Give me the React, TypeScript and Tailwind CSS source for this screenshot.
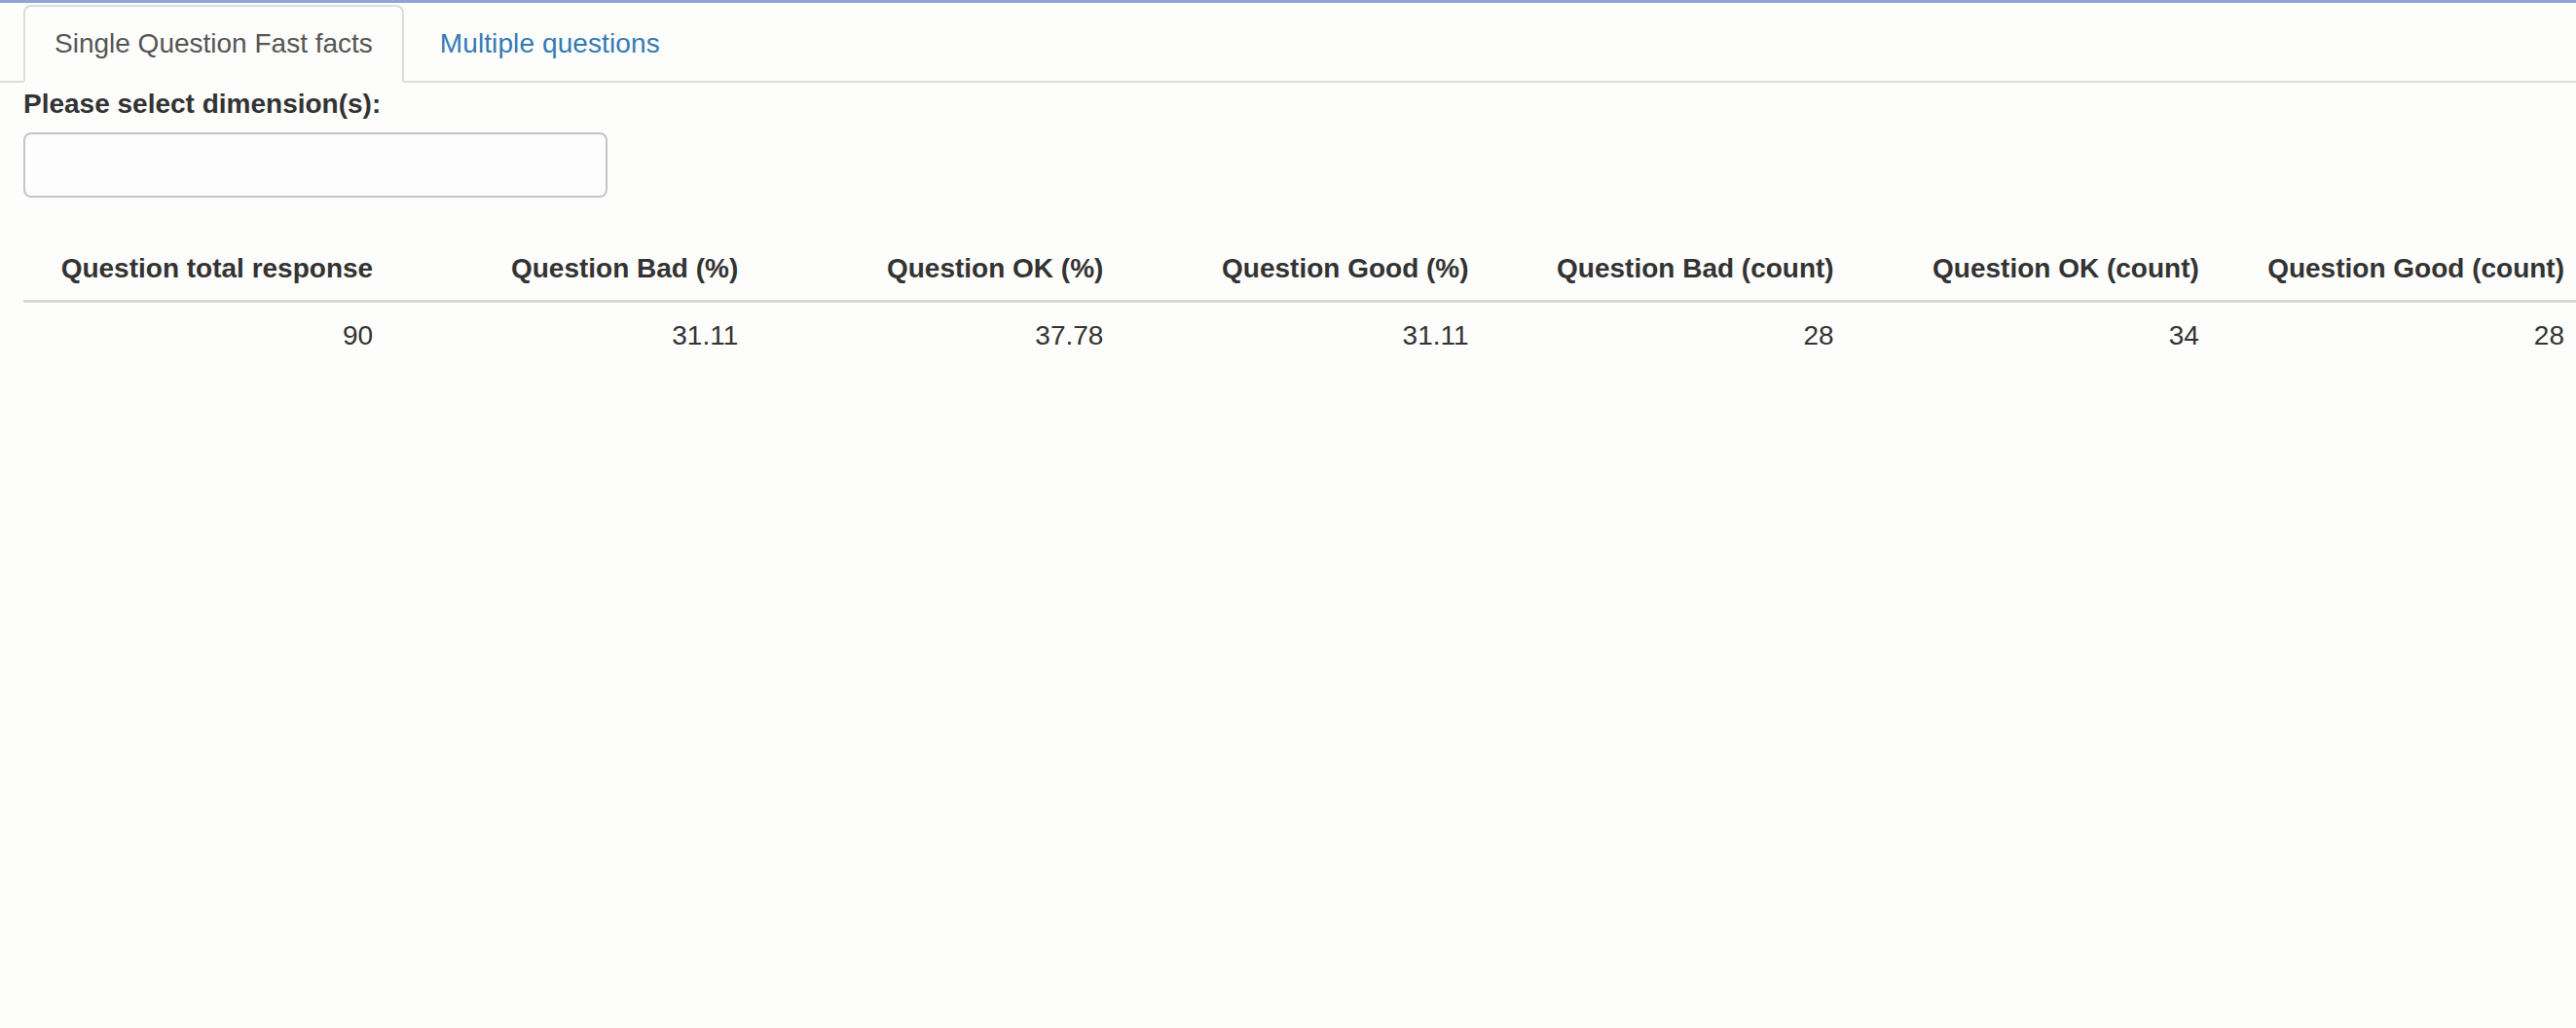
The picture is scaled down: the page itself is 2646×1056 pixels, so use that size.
import { FC, ReactNode } from 'react';

const headers = [
  'Question total response',
  'Question Bad (%)',
  'Question OK (%)',
  'Question Good (%)',
  'Question Bad (count)',
  'Question OK (count)',
  'Question Good (count)',
];

const values = ['90', '31.11', '37.78', '31.11', '28', '34', '28'];

const App: FC = (): ReactNode => {
  return (
    <div className="min-h-[1056px] w-full overflow-hidden bg-[#fdfdfb] font-['Liberation_Sans',Arial,sans-serif] text-[#333]">
      <div className="h-[3px] bg-[#8fa5d4]" />

      <ul className="mt-[2px] flex border-b-2 border-[#dddddd] pl-[24px]">
        <li className="-mb-[2px]">
          <div className="rounded-t-[8px] border-2 border-[#dddddd] border-b-transparent bg-[#fdfdfb] px-[30px] pt-[18px] pb-[18px] text-[28px] leading-[40px] text-[#555]">
            Single Question Fast facts
          </div>
        </li>
        <li className="-mb-[2px] ml-[4px]">
          <div className="border-2 border-transparent px-[31px] pt-[18px] pb-[18px] text-[28px] leading-[40px] tracking-[0.1px] text-[#337ab7]">
            Multiple questions
          </div>
        </li>
      </ul>

      <div className="pl-[24px]">
        <div className="mt-[2px] mb-[9px] text-[28px] font-bold leading-[40px] text-[#333]">
          Please select dimension(s):
        </div>
        <div className="h-[67px] w-[600px] rounded-[8px] border-2 border-[#c5c5cb] bg-[#fdfdfd]" />

        <div className="mt-[37px] w-[2626px]">
          <div className="grid grid-cols-7 border-b-[3px] border-[#d9d9d9]">
            {headers.map((h) => (
              <div
                key={h}
                className="px-[16px] pt-[16px] pb-[12px] text-right text-[28px] font-bold leading-[40px] whitespace-nowrap"
              >
                {h}
              </div>
            ))}
          </div>
          <div className="grid grid-cols-7">
            {values.map((v, i) => (
              <div
                key={i}
                className="px-[16px] pt-[14px] pb-[16px] text-right text-[28px] leading-[40px]"
              >
                {v}
              </div>
            ))}
          </div>
        </div>
      </div>
    </div>
  );
};

export default App;
